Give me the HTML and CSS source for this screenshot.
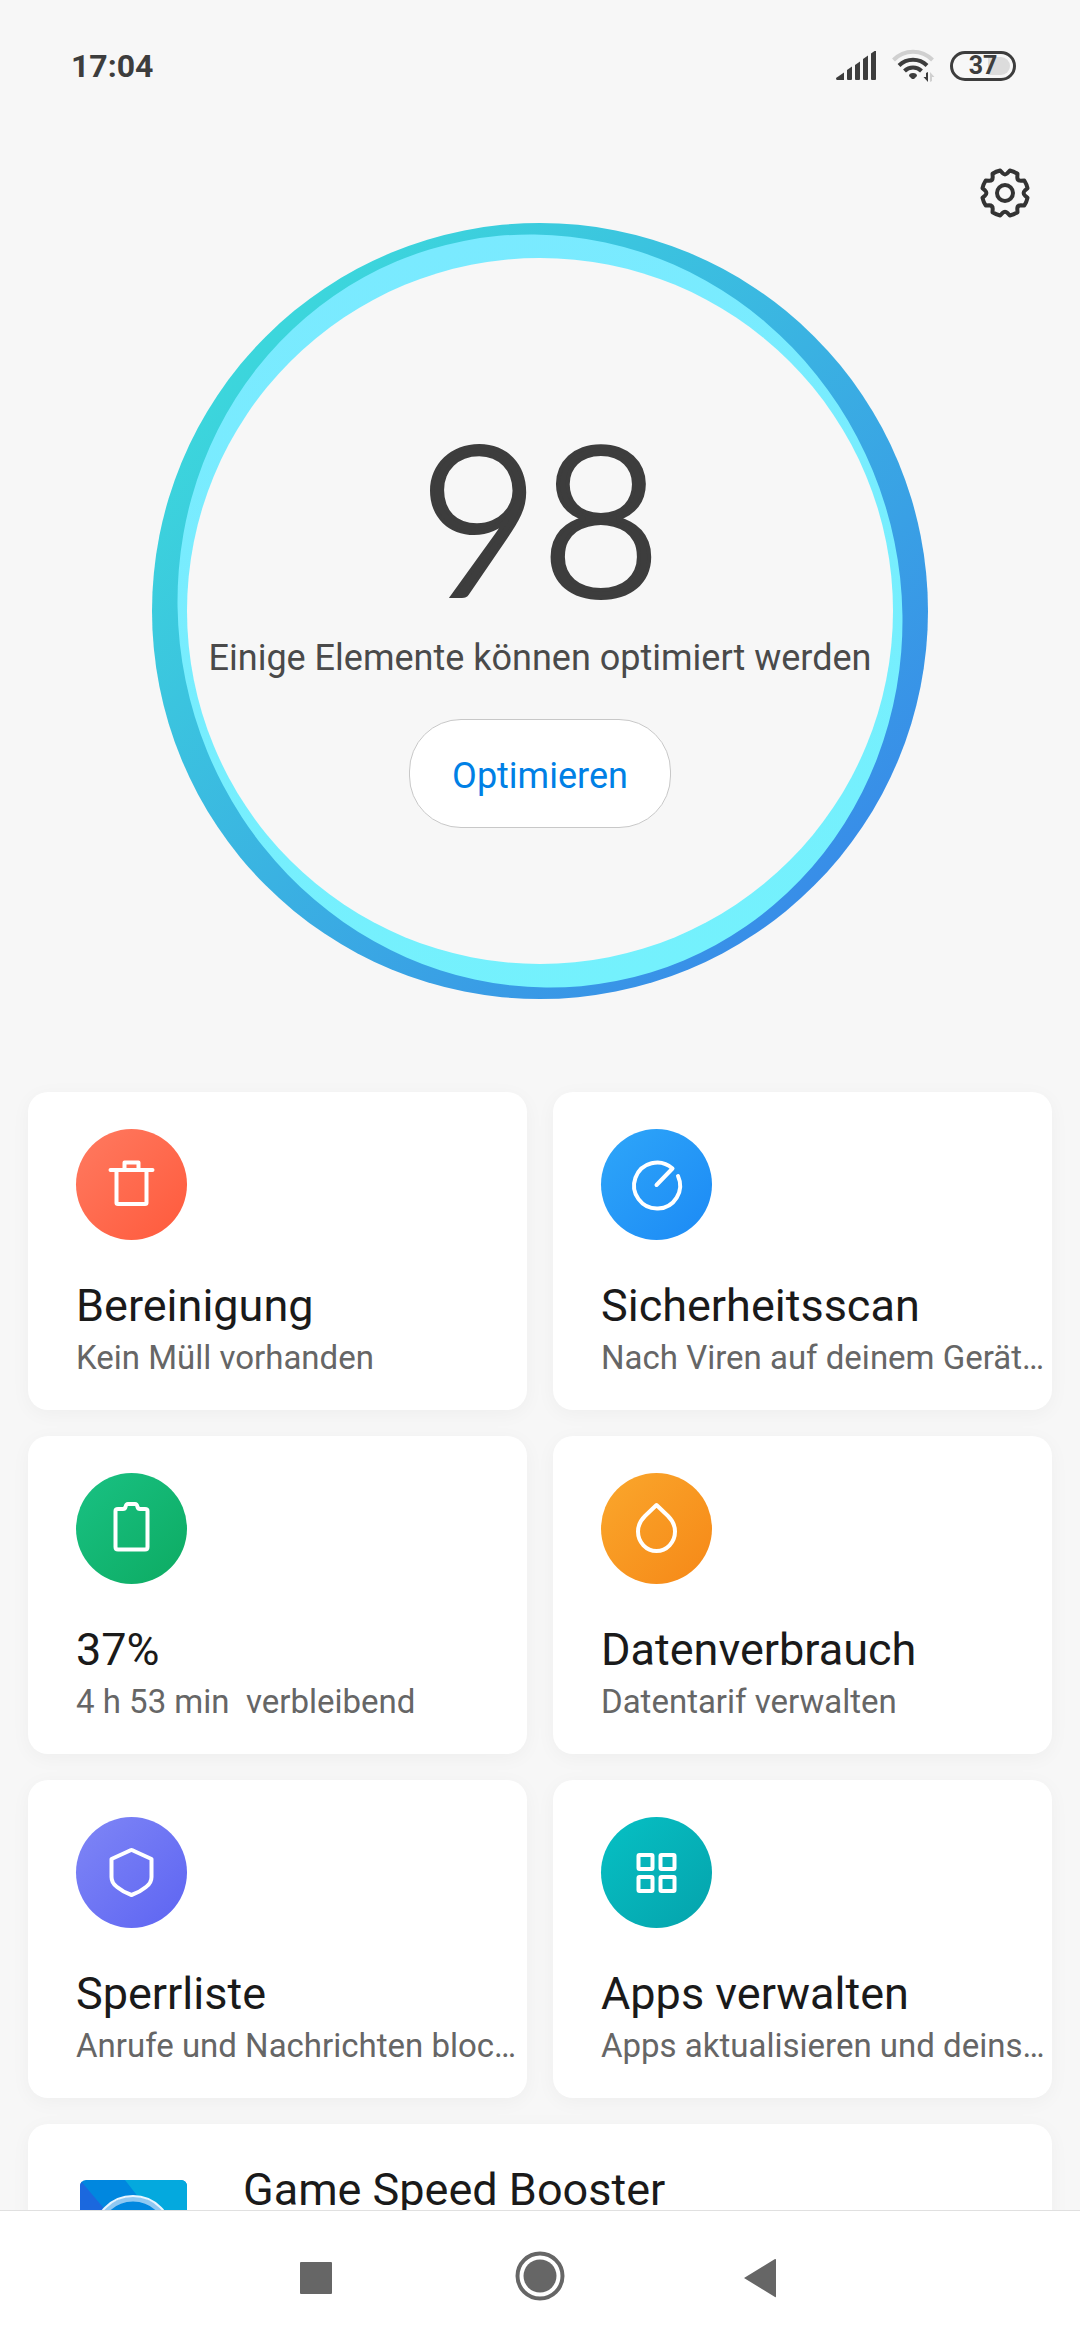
FILE: index.html
```html
<!DOCTYPE html>
<html lang="de">
<head>
    <meta charset="UTF-8">
    <meta name="viewport" content="width=device-width, initial-scale=1.0">
    <title>Sicherheit</title>
    <link rel="stylesheet" href="styles.css">
</head>
<body>
    <div class="status-bar">
        <span class="clock">17:04</span>
        <div class="status-icons">
            <svg class="signal" width="41" height="30" viewBox="0 0 41 30" fill="#3d3d3d">
                <path d="M0 27L8 21.500V29H1Q0 29 0 27Z"/>
                <path d="M11 19L16 15.500V28Q16 29 15 29H12Q11 29 11 28Z"/>
                <path d="M19 14L24 10.500V28Q24 29 23 29H20Q19 29 19 28Z"/>
                <path d="M27 8L32 4.500V28Q32 29 31 29H28Q27 29 27 28Z"/>
                <path d="M35 2.500L38.500 0H40V28Q40 29 39 29H36Q35 29 35 28Z"/>
            </svg>
            <svg class="wifi" width="43" height="34" viewBox="0 0 43 34" fill="none" stroke-width="4">
                <path d="M1.500 11A27 27 0 0 1 40.500 11" stroke="#d0d0d0"/>
                <path d="M7 16.500A20 20 0 0 1 35 16.500" stroke="#3d3d3d"/>
                <path d="M12.500 22A12 12 0 0 1 29.500 22" stroke="#3d3d3d"/>
                <path d="M17 27Q17 24 21 24T25 27L22 30H20Z" fill="#3d3d3d"/>
                <path d="M36 23V33L31.500 28H34V24Z" fill="#3d3d3d"/>
                <path d="M38 33V23L42.500 28H40V32Z" fill="#d0d0d0"/>
            </svg>
            <span class="battery">37</span>
        </div>
    </div>

    <main class="content">
        <div class="toolbar">
            <button class="settings-button" aria-label="Einstellungen">
                <svg width="52" height="52" viewBox="-26 -26 52 52" fill="none" stroke="#333" stroke-width="4" stroke-linejoin="round">
                    <path d="M22.500 4.800A23 23 0 0 1 19.300 12.500L15.800 12.300Q12.300 12.300 12.300 15.800L12.500 19.300A23 23 0 0 1 4.800 22.500L2.400 19.850Q0 17.400 -2.400 19.850L-4.800 22.500A23 23 0 0 1 -12.500 19.300L-12.300 15.800Q-12.300 12.300 -15.800 12.300L-19.300 12.500A23 23 0 0 1 -22.500 4.800L-19.850 2.400Q-17.400 0 -19.850 -2.400L-22.500 -4.800A23 23 0 0 1 -19.300 -12.500L-15.800 -12.300Q-12.300 -12.300 -12.300 -15.800L-12.500 -19.300A23 23 0 0 1 -4.800 -22.500L-2.400 -19.850Q0 -17.400 2.400 -19.850L4.800 -22.500A23 23 0 0 1 12.500 -19.300L12.300 -15.800Q12.300 -12.300 15.800 -12.300L19.300 -12.500A23 23 0 0 1 22.500 -4.800L19.850 -2.400Q17.400 0 19.850 2.400Z"/>
                    <circle r="8"/>
                </svg>
            </button>
        </div>

        <section class="score">
            <svg class="score-ring" viewBox="0 0 776 776">
                <defs>
                    <linearGradient id="ring" x1="0.15" y1="0.15" x2="0.85" y2="0.85">
                        <stop offset="0" stop-color="#3cd6dc"/>
                        <stop offset="1" stop-color="#388ee8"/>
                    </linearGradient>
                    <linearGradient id="glow" x1="0" y1="0.5" x2="1" y2="0.5">
                        <stop offset="0" stop-color="#7aeaff"/>
                        <stop offset="1" stop-color="#74f1fd"/>
                    </linearGradient>
                </defs>
                <circle cx="388" cy="388" r="388" fill="url(#ring)"/>
                <ellipse cx="388" cy="388" rx="378" ry="361" transform="rotate(73 388 388)" fill="url(#glow)"/>
                <circle cx="388" cy="388" r="353" fill="#f7f7f7"/>
            </svg>
            <div class="score-body">
                <div class="score-value">98</div>
                <p class="score-text">Einige Elemente können optimiert werden</p>
                <button class="optimize-button">Optimieren</button>
            </div>
        </section>

        <section class="cards">
            <a class="card" href="#">
                <span class="card-icon red">
                    <svg width="111" height="111" viewBox="0 0 111 111">
                        <path d="M34.500 41H76.500M40.500 41V74Q40.500 75 42 75H69Q70.500 75 70.500 74V41M48.500 41V33.500H62.500V41"/>
                    </svg>
                </span>
                <span class="card-title">Bereinigung</span>
                <span class="card-text">Kein Müll vorhanden</span>
            </a>
            <a class="card" href="#">
                <span class="card-icon blue">
                    <svg width="111" height="111" viewBox="0 0 111 111">
                        <path d="M55.500 56L71.500 39.500A23 23 0 1 0 77 47"/>
                    </svg>
                </span>
                <span class="card-title">Sicherheitsscan</span>
                <span class="card-text">Nach Viren auf deinem Gerät suchen</span>
            </a>
            <a class="card" href="#">
                <span class="card-icon green">
                    <svg width="111" height="111" viewBox="0 0 111 111">
                        <path d="M42 36H47Q49 36 49.500 34Q50 31 52 31H59Q61 31 61.500 34Q62 36 64 36H69Q71.500 36 71.500 38V74Q71.500 76.500 69 76.500H42Q39.500 76.500 39.500 74V38Q39.500 36 42 36Z"/>
                    </svg>
                </span>
                <span class="card-title">37%</span>
                <span class="card-text">4 h 53 min&nbsp; verbleibend</span>
            </a>
            <a class="card" href="#">
                <span class="card-icon orange">
                    <svg width="111" height="111" viewBox="0 0 111 111">
                        <path d="M55.500 32L67 43Q74 50 74 58.500A18.500 19.500 0 0 1 37 58.500Q37 50 44 43Z"/>
                    </svg>
                </span>
                <span class="card-title">Datenverbrauch</span>
                <span class="card-text">Datentarif verwalten</span>
            </a>
            <a class="card" href="#">
                <span class="card-icon violet">
                    <svg width="111" height="111" viewBox="0 0 111 111">
                        <path d="M53 34Q55.500 32 58 34L75.500 42V60Q75.500 66 70 70Q64 75 55.500 78Q47 75 41 70Q35.500 66 35.500 60V42Z"/>
                    </svg>
                </span>
                <span class="card-title">Sperrliste</span>
                <span class="card-text">Anrufe und Nachrichten blockieren</span>
            </a>
            <a class="card" href="#">
                <span class="card-icon teal">
                    <svg width="111" height="111" viewBox="0 0 111 111">
                        <rect x="37.500" y="38" width="14" height="14" rx="1"/>
                        <rect x="59.500" y="38" width="14" height="14" rx="1"/>
                        <rect x="37.500" y="60" width="14" height="14" rx="1"/>
                        <rect x="59.500" y="60" width="14" height="14" rx="1"/>
                    </svg>
                </span>
                <span class="card-title">Apps verwalten</span>
                <span class="card-text">Apps aktualisieren und deinstallieren</span>
            </a>
        </section>

        <a class="feature" href="#">
            <svg class="feature-icon" width="107" height="107" viewBox="0 0 107 107">
                <clipPath id="tile"><rect width="107" height="107" rx="6"/></clipPath>
                <g clip-path="url(#tile)">
                    <path d="M0 0H107V107H0Z" fill="#0087df"/>
                    <path d="M45 0H107V80Z" fill="#04a9de"/>
                    <path d="M0 0L90 107H0Z" fill="#1b68de"/>
                    <circle cx="53" cy="55" r="36" fill="#0087df" stroke="#8fc8f2" stroke-width="5"/>
                    <circle cx="53" cy="55" r="39" fill="none" stroke="#e8f5ff" stroke-width="2"/>
                </g>
            </svg>
            <span class="card-title">Game Speed Booster</span>
        </a>
    </main>

    <nav class="nav-bar">
        <button class="nav-button" aria-label="Letzte Apps">
            <svg width="50" height="50" viewBox="0 0 50 50" fill="#666"><rect x="9" y="11" width="32" height="32" rx="1"/></svg>
        </button>
        <button class="nav-button" aria-label="Startseite">
            <svg width="50" height="50" viewBox="0 0 50 50"><circle cx="25" cy="25" r="22.500" fill="none" stroke="#666" stroke-width="4"/><circle cx="25" cy="25" r="16.500" fill="#666"/></svg>
        </button>
        <button class="nav-button" aria-label="Zurück">
            <svg width="50" height="50" viewBox="0 0 50 50" fill="#666"><path d="M5 27L36 8Q37 7.500 37 9V45Q37 47 36 46Z"/></svg>
        </button>
    </nav>
</body>
</html>
```

FILE: styles.css
```css
:root {
    --page: #f7f7f7;
    --ink: #1a1a1a;
    --status: #3d3d3d;
    --muted: #666;
}

* {
    box-sizing: border-box;
}

body {
    margin: 0;
    height: 100vh;
    display: flex;
    flex-direction: column;
    font-family: Roboto, sans-serif;
    color: var(--ink);
    background-color: var(--page);
}

button {
    padding: 0;
    border: none;
    background: none;
    font-family: inherit;
    cursor: pointer;
}

svg {
    display: block;
}

.status-bar {
    flex: none;
    height: 132px;
    padding: 0 64px 0 71px;
    display: flex;
    align-items: center;
    justify-content: space-between;
}

.clock {
    font-size: 32px;
    font-weight: 700;
    color: var(--status);
}

.status-icons {
    display: flex;
    align-items: center;
    gap: 15px;
}

.battery {
    width: 66px;
    height: 30px;
    padding: 3px;
    border: 3px solid var(--status);
    border-radius: 15px;
    background: linear-gradient(to right, transparent 60%, #dcdcdc 60%) content-box;
    color: var(--status);
    font-size: 25px;
    font-weight: 700;
    line-height: 18px;
    text-align: center;
}

.content {
    flex: 1;
    min-height: 0;
    overflow: hidden;
}

.toolbar {
    display: flex;
    justify-content: flex-end;
    height: 91px;
    padding: 35px 49px 0 0;
}

.settings-button {
    width: 52px;
    height: 52px;
}

/* Score ring */
.score {
    display: grid;
    justify-content: center;
    grid-template-columns: minmax(0, 776px);
    margin-bottom: 93px;
}

.score-ring,
.score-body {
    grid-area: 1 / 1;
}

.score-ring {
    width: 100%;
}

.score-body {
    display: flex;
    flex-direction: column;
    align-items: center;
    padding-top: 186px;
}

.score-value {
    font-family: Lato, sans-serif;
    font-size: 210px;
    font-weight: 300;
    line-height: 212px;
    color: #3d3d3d;
    -webkit-text-stroke: 4px #3d3d3d;
}

.score-text {
    margin: 13px 0 0;
    font-size: 36px;
    line-height: 48px;
    color: #4a4a4a;
    white-space: nowrap;
}

.optimize-button {
    margin-top: 37px;
    padding-top: 4px;
    width: 262px;
    height: 109px;
    border: 1px solid #c8c8c8;
    border-radius: 52px;
    background-color: #fff;
    color: #0080e5;
    font-size: 36px;
}

/* Cards */
.cards {
    display: grid;
    grid-template-columns: repeat(2, minmax(0, 1fr));
    gap: 26px;
    padding: 0 28px;
}

.card,
.feature {
    background-color: #fff;
    border-radius: 20px;
    box-shadow: 0 4px 20px rgba(0, 0, 0, 0.04);
    color: var(--ink);
    text-decoration: none;
}

.card {
    display: flex;
    flex-direction: column;
    height: 318px;
    padding: 37px 4px 0 48px;
}

.card-icon {
    width: 111px;
    height: 111px;
    margin-bottom: 40px;
    border-radius: 50%;
}

.card-icon svg {
    fill: none;
    stroke: #fff;
    stroke-width: 4;
    stroke-linecap: round;
    stroke-linejoin: round;
}

.red {
    background: linear-gradient(135deg, #ff7a60, #ff5a3c);
}

.blue {
    background: linear-gradient(135deg, #2ea6f9, #1c8af5);
}

.green {
    background: linear-gradient(135deg, #19c183, #0dab62);
}

.orange {
    background: linear-gradient(135deg, #faa72c, #f68817);
}

.violet {
    background: linear-gradient(135deg, #7f86f6, #5d64f2);
}

.teal {
    background: linear-gradient(135deg, #06c0c4, #05a3ac);
}

.card-title {
    font-size: 45px;
    line-height: 52px;
}

.card-text {
    overflow: hidden;
    font-size: 33px;
    line-height: 52px;
    color: var(--muted);
    text-overflow: ellipsis;
    white-space: nowrap;
}

.feature {
    display: flex;
    gap: 56px;
    margin: 26px 28px;
    padding: 40px 52px;
}

.feature-icon {
    flex: none;
    margin-top: 16px;
}

/* System navigation */
.nav-bar {
    flex: none;
    height: 130px;
    display: flex;
    align-items: center;
    justify-content: center;
    gap: 174px;
    border-top: 1px solid #e0e0e0;
    background-color: #fff;
}

.nav-button {
    width: 50px;
    height: 50px;
}
```
